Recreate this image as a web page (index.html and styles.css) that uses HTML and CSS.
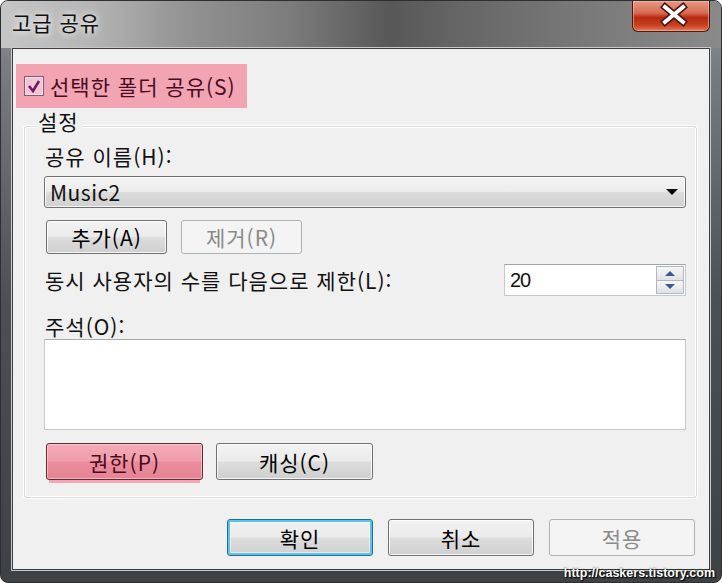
FILE: index.html
```html
<!DOCTYPE html>
<html lang="ko">
<head>
    <meta charset="UTF-8">
    <meta name="viewport" content="width=device-width, initial-scale=1.0">
    <title>고급 공유</title>
    <link rel="stylesheet" href="styles.css">
</head>
<body>
    <div class="window">
        <div class="titlebar">
            <span class="title">고급 공유</span>
            <div class="close-btn">
                <svg width="78" height="31" viewBox="0 0 78 31">
                    <path d="M33 7 L51 22 M51 7 L33 22" stroke="#4a1208" stroke-width="7" stroke-linecap="square"/>
                    <path d="M33 7 L51 22 M51 7 L33 22" stroke="#ffffff" stroke-width="4" stroke-linecap="square"/>
                </svg>
            </div>
        </div>

        <div class="client">
            <label class="share-check">
                <span class="checkbox">
                    <svg width="18" height="18" viewBox="0 0 18 18">
                        <path d="M4 9 L8 14 L14 4" fill="none" stroke="#6a1e66" stroke-width="2.6"/>
                    </svg>
                </span>
                <span>선택한 폴더 공유(S)</span>
            </label>

            <div class="group">
                <span class="group-title">설정</span>
                <div class="field-label">공유 이름(H):</div>
                <div class="combo">
                    <span class="combo-value">Music2</span>
                    <span class="combo-arrow"></span>
                </div>
                <div class="btn-row">
                    <button class="btn btn-small">추가(A)</button>
                    <button class="btn btn-small disabled">제거(R)</button>
                </div>
                <div class="limit-row">
                    <span>동시 사용자의 수를 다음으로 제한(L):</span>
                    <div class="spin">
                        <span class="spin-value">20</span>
                        <div class="spin-buttons">
                            <span class="spin-up"></span>
                            <span class="spin-down"></span>
                        </div>
                    </div>
                </div>
                <div class="field-label comment-label">주석(O):</div>
                <div class="textarea"></div>
                <div class="btn-row lower">
                    <button class="btn btn-wide btn-perm">권한(P)</button>
                    <button class="btn btn-wide">캐싱(C)</button>
                </div>
            </div>

            <div class="dialog-buttons">
                <button class="btn btn-dlg btn-default">확인</button>
                <button class="btn btn-dlg">취소</button>
                <button class="btn btn-dlg disabled">적용</button>
            </div>
        </div>

        <div class="watermark">http://caskers.tistory.com</div>
    </div>
</body>
</html>
```

FILE: styles.css
```css
body {
    margin: 0;
    background: #ffffff;
    font-family: "Noto Sans CJK KR", sans-serif;
    font-size: 21px;
    letter-spacing: 1px;
    color: #111;
}
.window {
    position: relative;
    width: 722px;
    height: 583px;
    box-sizing: border-box;
    display: flex;
    flex-direction: column;
    border: 1px solid #2c3032;
    border-radius: 8px;
    overflow: hidden;
    background: linear-gradient(to bottom, #9a9a9a 0, #7a7e80 60px, #4c5052 300px, #3e4244 100%);
}
.titlebar {
    display: flex;
    align-items: flex-start;
    height: 47px;
    flex-shrink: 0;
    padding-left: 11px;
    background: linear-gradient(to right, #c6c6c6 0%, #b6b6b6 12%, #929292 26%, #7c7c7c 40%, #585858 54%, #666 64%, #787878 80%, #8a8a8a 100%);
}
.title {
    margin-top: 8px;
    line-height: 26px;
    color: #101010;
    text-shadow: 0 0 6px rgba(255, 255, 255, 0.9), 0 0 10px rgba(255, 255, 255, 0.6);
}
.close-btn {
    margin-left: auto;
    margin-right: 11px;
    width: 78px;
    height: 31px;
    box-sizing: border-box;
    border: 1px solid #4a1a12;
    border-top: none;
    border-radius: 0 0 6px 6px;
    background: linear-gradient(to bottom, #e49a88 0%, #d86a50 40%, #b82a12 55%, #c84020 80%, #e07a58 100%);
    box-shadow: inset 0 0 0 1px rgba(255, 200, 180, 0.5);
}
.close-btn svg {
    display: block;
    margin: -1px 0 0 -1px;
}
.client {
    flex: 1;
    display: flex;
    flex-direction: column;
    margin: 0 11px 12px 11px;
    background: #f0f0f0;
    border: 1px solid #3a3f42;
    box-shadow: 0 0 0 1px #c4c9cc;
}
.share-check {
    display: flex;
    align-items: center;
    gap: 6px;
    margin: 15px 0 0 3px;
    width: 231px;
    height: 44px;
    box-sizing: border-box;
    padding-left: 8px;
    background: #f2a4b2;
    color: #4a0c22;
    line-height: 24px;
}
.checkbox {
    width: 20px;
    height: 20px;
    box-sizing: border-box;
    border: 1px solid #8c5674;
    background: #f4c6d4;
    box-shadow: inset 0 0 0 1px #fbe0e8;
    display: flex;
    align-items: center;
    justify-content: center;
}
.group {
    position: relative;
    margin: 18px 12px 0 11px;
    padding: 17px 10px 17px 19px;
    border: 1px solid #d6dadd;
    border-radius: 3px;
    box-shadow: inset 0 0 0 1px #ffffff, 0 0 0 1px #ffffff;
}
.group-title {
    position: absolute;
    top: -18px;
    left: 10px;
    padding: 0 3px;
    background: #f0f0f0;
    line-height: 24px;
}
.field-label {
    line-height: 24px;
    padding-left: 1px;
}
.combo {
    display: flex;
    align-items: center;
    justify-content: space-between;
    height: 32px;
    margin-top: 8px;
    box-sizing: border-box;
    padding: 0 7px 0 5px;
    border: 1px solid #707070;
    border-radius: 3px;
    background: linear-gradient(to bottom, #f4f4f4 0%, #ececec 48%, #dcdcdc 52%, #d0d0d0 100%);
    box-shadow: inset 0 0 0 1px rgba(255, 255, 255, 0.8);
    line-height: 24px;
}
.combo-value {
    letter-spacing: 0.5px;
}
.combo-arrow {
    width: 0;
    height: 0;
    border-left: 6px solid transparent;
    border-right: 6px solid transparent;
    border-top: 6px solid #000;
}
.btn-row {
    display: flex;
    gap: 14px;
    margin-top: 12px;
    padding-left: 2px;
}
.btn-row.lower {
    gap: 13px;
    margin-top: 13px;
}
.btn {
    font: inherit;
    letter-spacing: inherit;
    color: #000;
    line-height: 24px;
    padding: 0;
    box-sizing: border-box;
    border: 1px solid #707070;
    border-radius: 3px;
    background: linear-gradient(to bottom, #f2f2f2 0%, #ebebeb 48%, #dddddd 52%, #cfcfcf 100%);
    box-shadow: inset 0 0 0 1px rgba(255, 255, 255, 0.8);
}
.btn.disabled {
    color: #8a8a8a;
    border-color: #adb2b5;
    background: #f4f4f4;
    box-shadow: none;
}
.btn-small {
    width: 121px;
    height: 34px;
}
.btn-wide {
    width: 157px;
    height: 37px;
}
.btn-perm {
    color: #4a0a1c;
    border-color: #5c2c34;
    background: linear-gradient(to bottom, #f4aab6 0%, #f09eac 48%, #ea8c9c 52%, #e48494 100%);
    box-shadow: inset 0 0 0 1px rgba(255, 210, 220, 0.6), 0 6px 0 -3px #f4a6b4;
}
.limit-row {
    display: flex;
    align-items: center;
    margin-top: 10px;
    height: 32px;
    padding-left: 1px;
}
.spin {
    margin-left: auto;
    width: 182px;
    height: 32px;
    box-sizing: border-box;
    border: 1px solid #c6c8cc;
    border-top-color: #a0a4aa;
    background: #ffffff;
    display: flex;
    align-items: center;
    padding-left: 5px;
}
.spin-value {
    font-family: "Liberation Sans", sans-serif;
    font-size: 20px;
    letter-spacing: -1px;
    line-height: 24px;
}
.spin-buttons {
    margin-left: auto;
    margin-right: 1px;
    width: 28px;
    height: 28px;
    display: flex;
    flex-direction: column;
}
.spin-up, .spin-down {
    flex: 1;
    display: flex;
    align-items: center;
    justify-content: center;
    border: 1px solid #b4b8bc;
    background: linear-gradient(to bottom, #f6f6f6, #dfe2e6);
}
.spin-down {
    border-top: none;
}
.spin-up::after, .spin-down::after {
    content: "";
    width: 0;
    height: 0;
    border-left: 5px solid transparent;
    border-right: 5px solid transparent;
}
.spin-up::after {
    border-bottom: 5px solid #3a5a8e;
}
.spin-down::after {
    border-top: 5px solid #3a5a8e;
}
.comment-label {
    margin-top: 18px;
}
.textarea {
    margin-top: 1px;
    height: 91px;
    box-sizing: border-box;
    border: 1px solid #c6c8cc;
    border-top-color: #a6aaae;
    background: #ffffff;
}
.dialog-buttons {
    display: flex;
    justify-content: flex-end;
    gap: 15px;
    margin: 21px 14px 0 0;
}
.btn-dlg {
    width: 146px;
    height: 37px;
}
.btn-default {
    border-color: #246c98;
    box-shadow: inset 0 0 0 2px #5cc4ea, inset 0 0 0 3px rgba(255, 255, 255, 0.5);
}
.watermark {
    position: absolute;
    right: 6px;
    bottom: 2px;
    font-family: "Liberation Sans", sans-serif;
    font-weight: bold;
    font-size: 12.5px;
    letter-spacing: 0;
    line-height: 14px;
    color: #ffffff;
    text-shadow: 0 0 2px #000, 1px 1px 1px #000;
}
```
